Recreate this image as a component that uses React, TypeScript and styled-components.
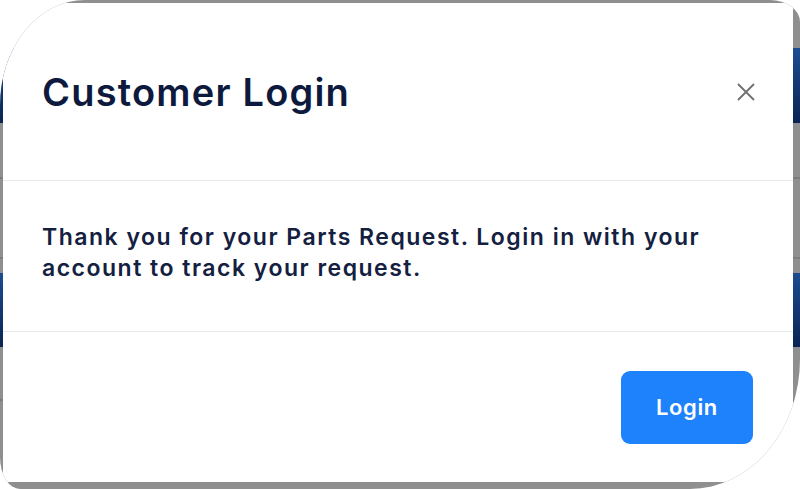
import React from 'react';
import styled, { createGlobalStyle } from 'styled-components';

const GlobalStyle = createGlobalStyle`
  html, body {
    margin: 0;
    padding: 0;
    background: #ffffff;
    overflow: hidden;
  }
  body {
    font-family: Inter, "Open Sans", Arial, sans-serif;
  }
`;

const Stage = styled.div`
  width: 800px;
  height: 489px;
  background: #ffffff;
`;

const Backdrop = styled.div`
  width: 800px;
  height: 489px;
  box-sizing: border-box;
  padding: 3px 7px 7px 3px;
  display: flex;
  border-radius: 85px 30px 110px 20px / 105px 22px 130px 32px;
  overflow: hidden;
  background:
    linear-gradient(
      to bottom,
      #8f8f8f 0px,
      #8f8f8f 48px,
      #1b4c92 48px,
      #0a2452 123px,
      #8f8f8f 123px,
      #8f8f8f 177px,
      #7d7d7d 177px,
      #7d7d7d 179px,
      #8f8f8f 179px,
      #8f8f8f 257px,
      #7d7d7d 257px,
      #7d7d7d 259px,
      #8f8f8f 259px,
      #8f8f8f 273px,
      #1b4c92 273px,
      #0a2452 347px,
      #8f8f8f 347px,
      #8f8f8f 399px,
      #7d7d7d 399px,
      #7d7d7d 401px,
      #8f8f8f 401px
    );
`;

const Modal = styled.div`
  flex: 1;
  background: #ffffff;
  display: flex;
  flex-direction: column;
`;

const Header = styled.div`
  height: 177px;
  display: flex;
  align-items: center;
  justify-content: space-between;
  padding: 0 38px 0 39px;
  border-bottom: 1px solid #e7e8ea;
`;

const Title = styled.h2`
  margin: 0;
  font-size: 38px;
  font-weight: 600;
  color: #0d1a3d;
  letter-spacing: 1.2px;
`;

const CloseButton = styled.button`
  width: 18px;
  height: 18px;
  padding: 0;
  border: none;
  background: transparent;
  display: flex;
  cursor: pointer;
`;

const Body = styled.div`
  height: 150px;
  display: flex;
  align-items: center;
  padding: 0 39px;
  border-bottom: 1px solid #e7e8ea;
`;

const Message = styled.p`
  margin: 0 0 6px;
  font-size: 23px;
  line-height: 31px;
  font-weight: 600;
  letter-spacing: 1.5px;
  color: #14203f;
  max-width: 700px;
`;

const Footer = styled.div`
  flex: 1;
  display: flex;
  align-items: center;
  justify-content: flex-end;
  padding: 0 40px;
`;

const PrimaryButton = styled.button`
  width: 132px;
  height: 73px;
  border: none;
  border-radius: 9px;
  background: #1d82fc;
  color: #ffffff;
  font-family: Inter, "Open Sans", Arial, sans-serif;
  font-size: 22px;
  font-weight: 600;
  letter-spacing: 0.6px;
  cursor: pointer;
`;

export default function App() {
  return (
    <Stage>
      <GlobalStyle />
      <Backdrop>
        <Modal>
          <Header>
            <Title>Customer Login</Title>
            <CloseButton aria-label="Close">
              <svg width="18" height="18" viewBox="0 0 18 18">
                <path d="M1 1L17 17M17 1L1 17" stroke="#6f6f72" strokeWidth="1.8" />
              </svg>
            </CloseButton>
          </Header>
          <Body>
            <Message>
              Thank you for your Parts Request. Login in with your account to track your request.
            </Message>
          </Body>
          <Footer>
            <PrimaryButton>Login</PrimaryButton>
          </Footer>
        </Modal>
      </Backdrop>
    </Stage>
  );
}
